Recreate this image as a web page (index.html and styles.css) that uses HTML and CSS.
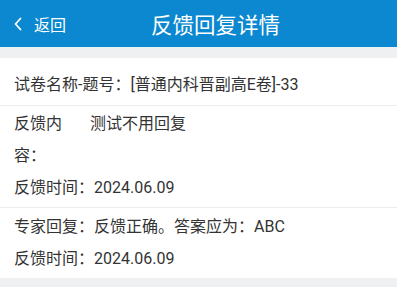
FILE: index.html
```html
<!DOCTYPE html>
<html lang="zh-CN">
<head>
  <meta charset="UTF-8">
  <meta name="viewport" content="width=device-width, initial-scale=1.0">
  <title>反馈回复详情</title>
  <link rel="stylesheet" href="styles.css">
</head>
<body>

<header class="topbar">
  <a class="back" href="#">
    <svg class="back-icon" width="10" height="14" viewBox="0 0 10 14">
      <path d="M7.5 1.5 L2.5 7 L7.5 12.5" fill="none" stroke="#fff" stroke-width="1.8" stroke-linecap="round" stroke-linejoin="round"/>
    </svg>
    <span>返回</span>
  </a>
  <h1 class="title">反馈回复详情</h1>
</header>

<main class="content">
  <section class="card">
    <div class="block block-head">
      <p class="line">试卷名称-题号：[普通内科晋副高E卷]-33</p>
    </div>

    <div class="block">
      <div class="line row">
        <span class="label">反馈内容：</span>
        <span class="value">测试不用回复</span>
      </div>
      <p class="line">反馈时间：2024.06.09</p>
    </div>

    <div class="block">
      <p class="line">专家回复：反馈正确。答案应为：ABC</p>
      <p class="line">反馈时间：2024.06.09</p>
    </div>
  </section>
</main>

</body>
</html>
```

FILE: styles.css
```css
body {
  margin: 0;
  padding: 0;
  background: #fff;
  font-family: Roboto, "Noto Sans CJK SC", sans-serif;
  color: #333;
}
.topbar {
  display: flex;
  align-items: center;
  height: 47px;
  background-color: #0b88cf;
  color: #fff;
}
.back {
  display: flex;
  align-items: center;
  width: 138px;
  padding-left: 13px;
  color: #fff;
  text-decoration: none;
  font-size: 16px;
  box-sizing: border-box;
}
.back-icon {
  margin-right: 11px;
}
.title {
  margin: 0 0 0 13px;
  font-size: 21.5px;
  font-weight: normal;
  letter-spacing: 0;
}
.content {
  background: #eff0f2;
  padding: 11px 0 9px;
}
.card {
  background: #fff;
}
.block {
  padding: 2px 14px 3px;
  border-bottom: 1px solid #ececec;
  font-size: 16px;
}
.block:last-child {
  border-bottom: none;
  padding-top: 3px;
}
.block-head {
  padding-top: 11px;
  padding-bottom: 4px;
}
.line {
  margin: 0;
  line-height: 32px;
}
.row {
  display: flex;
}
.label {
  width: 56px;
  margin-right: 20px;
  flex-shrink: 0;
}
```
